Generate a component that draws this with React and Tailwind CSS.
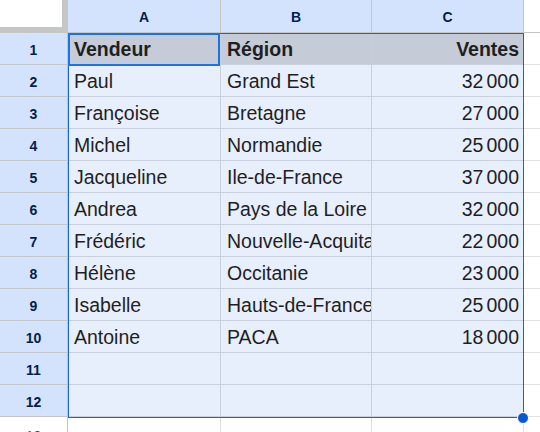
import React from 'react';

const rows = [
  ['Vendeur', 'Région', 'Ventes'],
  ['Paul', 'Grand Est', '32 000'],
  ['Françoise', 'Bretagne', '27 000'],
  ['Michel', 'Normandie', '25 000'],
  ['Jacqueline', 'Ile-de-France', '37 000'],
  ['Andrea', 'Pays de la Loire', '32 000'],
  ['Frédéric', 'Nouvelle-Acquitaine', '22 000'],
  ['Hélène', 'Occitanie', '23 000'],
  ['Isabelle', 'Hauts-de-France', '25 000'],
  ['Antoine', 'PACA', '18 000'],
  ['', '', ''],
  ['', '', ''],
];

const cols = ['A', 'B', 'C'];
const colWidths = ['w-[153px]', 'w-[151px]', 'w-[152px]'];

// numbers use a narrow thousands gap like Sheets' fr locale
const renderValue = (v) => {
  const m = /^(\d+) (\d{3})$/.exec(v);
  if (!m) return v;
  return (
    <>
      {m[1]}
      <span className="ml-[3px]">{m[2]}</span>
    </>
  );
};

const App = () => {
  return (
    <div
      className="relative w-[540px] h-[432px] overflow-hidden bg-white text-[#1f1f1f]"
      style={{ fontFamily: '"Liberation Sans", Arial, sans-serif' }}
    >
      {/* Column headers */}
      <div className="flex h-[33px]">
        <div className="w-[68px] shrink-0 bg-[#c4c7c5] pr-[5px] pb-[5px] border-r border-b border-[#c4c7c5]">
          <div className="w-full h-full bg-white"></div>
        </div>
        {cols.map((c, i) => (
          <div
            key={c}
            className={`${colWidths[i]} shrink-0 flex items-center justify-center pt-[2px] bg-[#d3e3fd] border-r border-b border-[#c4c7c5] text-[14px] font-bold text-[#041e49]`}
          >
            {c}
          </div>
        ))}
        <div className="flex-1 border-b border-[#c4c7c5] bg-white"></div>
      </div>

      {/* Rows */}
      {rows.map((r, ri) => {
        const header = ri === 0;
        return (
          <div key={ri} className="flex h-[32px]">
            <div className="w-[68px] shrink-0 flex items-center justify-center pt-[3px] bg-[#d3e3fd] border-r border-b border-[#c4c7c5] text-[14px] font-bold text-[#041e49]">
              {ri + 1}
            </div>
            {r.map((v, ci) => (
              <div
                key={ci}
                className={`${colWidths[ci]} shrink-0 flex items-center overflow-hidden whitespace-nowrap border-r border-b border-[#c7cfdc] pl-[6px] pt-[3px] text-[19.5px] ${
                  header ? 'bg-[#c5ccd7] font-bold' : 'bg-[#e7eefc]'
                } ${ci === 2 ? 'justify-end pr-[4px]' : 'pr-[6px]'}`}
              >
                {renderValue(v)}
              </div>
            ))}
            <div className="flex-1 border-b border-[#e1e1e1] bg-white"></div>
          </div>
        );
      })}

      {/* Row 13 */}
      <div className="flex h-[32px]">
        <div className="w-[68px] shrink-0 flex items-start justify-center pt-[9px] bg-white border-r border-[#c4c7c5] text-[14px] text-[#444746]">
          13
        </div>
        <div className="w-[153px] shrink-0 border-r border-[#e1e1e1]"></div>
        <div className="w-[151px] shrink-0 border-r border-[#e1e1e1]"></div>
        <div className="w-[152px] shrink-0 border-r border-[#e1e1e1]"></div>
      </div>

      {/* Selection range outline */}
      <div className="absolute left-[68px] top-[33px] w-[456px] h-[385px] border border-[#1a62d8] pointer-events-none"></div>
      {/* Active cell A1 */}
      <div className="absolute left-[68px] top-[33px] w-[152px] h-[33px] border-2 border-[#1a73e8] pointer-events-none"></div>
      {/* Fill handle */}
      <div className="absolute left-[517px] top-[412px] w-[12px] h-[12px] rounded-full bg-[#0b57d0] border border-white"></div>
    </div>
  );
};

export default App;
